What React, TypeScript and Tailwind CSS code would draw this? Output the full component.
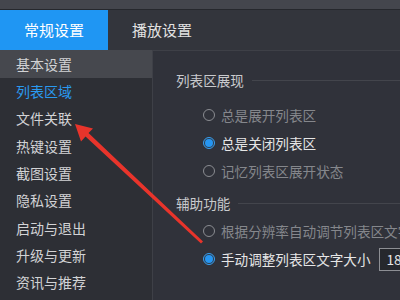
import React from "react";

const menu = ["列表区域", "文件关联", "热键设置", "截图设置", "隐私设置", "启动与退出", "升级与更新", "资讯与推荐"];

function Radio({ checked }: { checked?: boolean }) {
  if (checked) {
    return (
      <span className="shrink-0 w-[12px] h-[12px] rounded-full border border-[#3aa0f0] bg-[#2b3a4a] flex items-center justify-center">
        <span className="w-[8px] h-[8px] rounded-full bg-[#2696f2]" />
      </span>
    );
  }
  return <span className="shrink-0 w-[12px] h-[12px] rounded-full border border-[#8a8c91]" />;
}

function Option({ label, checked, children }: { label: string; checked?: boolean; children?: React.ReactNode }) {
  return (
    <div className="h-[28px] flex items-center pl-[50px] gap-[6px]">
      <Radio checked={checked} />
      <span className={"shrink-0 " + (checked ? "text-[#e6e6e6]" : "text-[#85878c]")}>{label}</span>
      {children}
    </div>
  );
}

function Heading({ title }: { title: string }) {
  return (
    <div className="h-[20px] flex items-center pl-[23px] gap-[8px] text-[#c9cacd]">
      <span className="whitespace-nowrap">{title}</span>
      <span className="flex-1 h-px bg-[#43454c]" />
    </div>
  );
}

export default function App() {
  return (
    <div
      className="relative w-[400px] h-[300px] overflow-hidden bg-[#2d2f35] text-[14px]"
      style={{ fontFamily: '"Noto Sans CJK SC", "Noto Sans", sans-serif' }}
    >
      <div className="h-[10px] bg-[#44464d] border-b border-[#26282d]" />
      <div className="h-[40px] flex bg-[#33353c] text-[15px]">
        <div className="w-[108px] flex items-center justify-center bg-[#1f96f3] text-white">常规设置</div>
        <div className="w-[108px] flex items-center justify-center text-[#e2e2e2]">播放设置</div>
      </div>
      <div className="flex h-[250px]">
        <div className="w-[152px] shrink-0 text-[#d2d3d5]">
          <div className="h-[28px] flex items-center pl-[16px] bg-[#46484e]">基本设置</div>
          {menu.map((m, i) => (
            <div key={m} className={"h-[27.3px] flex items-center pl-[16px] " + (i === 0 ? "text-[#2a9af0]" : "")}>
              {m}
            </div>
          ))}
        </div>
        <div className="flex-1 min-w-0 overflow-hidden bg-[#30323a] border-t border-l border-[#3e4047] whitespace-nowrap text-[13.6px]">
          <div className="mt-[19px]">
            <Heading title="列表区展现" />
          </div>
          <div className="mt-[11px]">
            <Option label="总是展开列表区" />
            <Option label="总是关闭列表区" checked />
            <Option label="记忆列表区展开状态" />
          </div>
          <div className="mt-[8px]">
            <Heading title="辅助功能" />
          </div>
          <div className="mt-[4px]">
            <Option label="根据分辨率自动调节列表区文字大小" />
            <Option label="手动调整列表区文字大小" checked>
              <span className="ml-[2px] h-[23px] w-[60px] shrink-0 border border-[#8d8f94] bg-[#26282d] text-[#e6e6e6] flex items-center pl-[7px]">
                18
              </span>
            </Option>
          </div>
        </div>
      </div>
      <svg className="absolute left-0 top-0 pointer-events-none" width="400" height="300">
        <polygon
          points="75,124 93,128.5 88.5,133 203,241.5 201,243.5 85.5,136.5 81,141.5"
          fill="#e8342b"
        />
      </svg>
    </div>
  );
}
